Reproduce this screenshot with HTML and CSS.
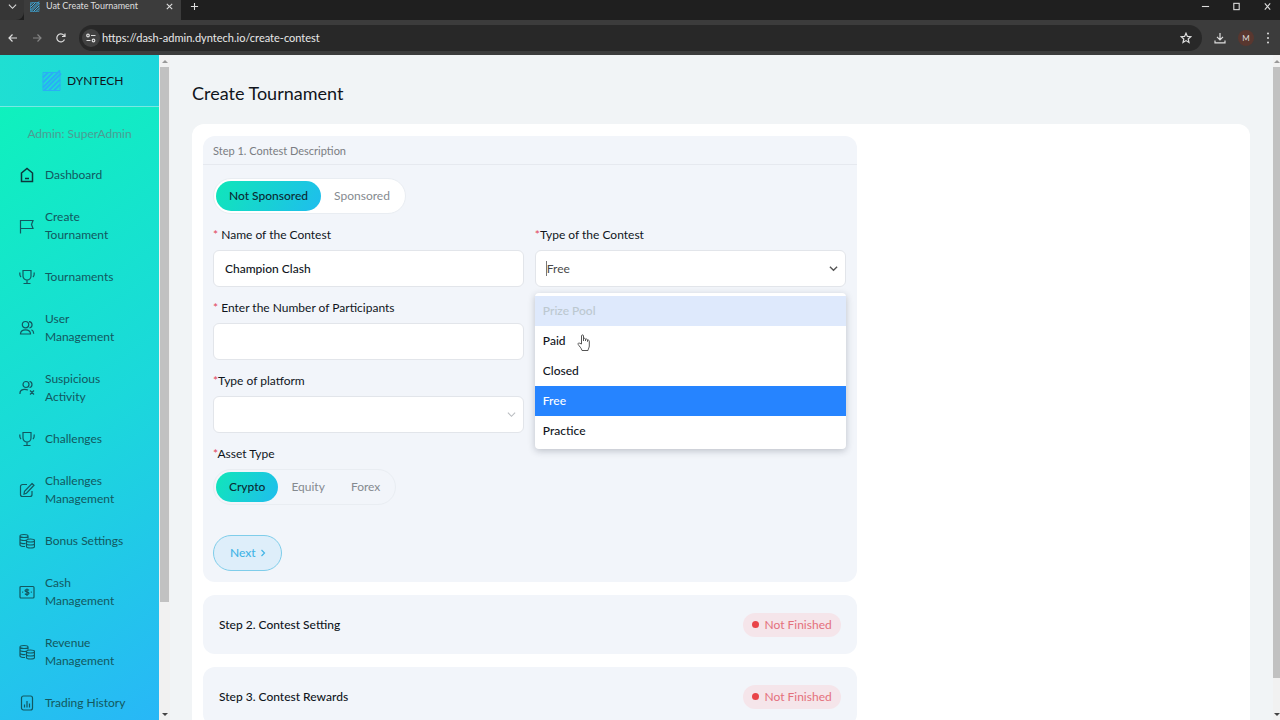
FILE: index.html
```html
<!DOCTYPE html>
<html lang="en">
<head>
<meta charset="utf-8">
<title>Uat Create Tournament</title>
<link rel="stylesheet" href="styles.css">
</head>
<body>
<svg class="defs" aria-hidden="true">
  <defs>
    <symbol id="logo" viewBox="0 0 20 22"><path fill="none" stroke="currentColor" stroke-width="2" d="M1 8 6 3M1 13 11 3M1 18 18 1M2 21 19 4M7 21 18 10M12 21 18 15"/><path fill="none" stroke="currentColor" stroke-width="1" d="M1 3h17v18H1z"/></symbol>
    <symbol id="cup" viewBox="0 0 16 16"><path d="M4 1.500h8v5.500a4 4 0 0 1-8 0zM8 11v3.500M4.500 14.500h7M1 3.500c-.5 2 0 3.500 1 4.500M15 3.500c.5 2 0 3.500-1 4.500"/></symbol>
    <symbol id="coins" viewBox="0 0 16 16"><path d="M1 3c0-2 8-2 8 0s-8 2-8 0v9c0 1.200 2.500 1.600 5 1.500M9 3v2.500M1 6c0 1.500 4 1.800 6 1.200M1 9c0 1.400 3 1.700 5.500 1.500M7.500 7.500c0-2 8-2 8 0s-8 2-8 0v6c0 2 8 2 8 0v-6M7.500 10.500c0 2 8 2 8 0"/></symbol>
    <symbol id="down" viewBox="0 0 10 10"><path d="m1 3 4 4 4-4"/></symbol>
  </defs>
</svg>

<header class="browser">
  <div class="tabstrip">
    <button class="tab-search" aria-label="Search tabs"><svg class="ico ico-xs"><use href="#down"/></svg></button>
    <div class="tab">
      <svg class="favicon"><use href="#logo"/></svg>
      <span class="tab-title">Uat Create Tournament</span>
      <button class="bare" aria-label="Close tab"><svg class="ico ico-xs" viewBox="0 0 10 10"><path d="m2 2 6 6M8 2 2 8"/></svg></button>
    </div>
    <button class="bare new-tab" aria-label="New tab"><svg class="ico ico-xs" viewBox="0 0 10 10"><path d="M5 1v8M1 5h8"/></svg></button>
    <div class="window-buttons">
      <button class="bare" aria-label="Minimize"><svg class="ico ico-xs" viewBox="0 0 10 10"><path d="M1 5h8"/></svg></button>
      <button class="bare" aria-label="Maximize"><svg class="ico ico-xs" viewBox="0 0 10 10"><rect x="2" y="1.500" width="6" height="7"/></svg></button>
      <button class="bare" aria-label="Close"><svg class="ico ico-xs" viewBox="0 0 10 10"><path d="m2 1.500 6 7M8 1.500l-6 7"/></svg></button>
    </div>
  </div>
  <div class="toolbar">
    <div class="history">
      <button class="bare" aria-label="Back"><svg class="ico ico-sm" viewBox="0 0 12 12"><path d="M10 6H2M5.500 2.500 2 6l3.500 3.500"/></svg></button>
      <button class="bare dim" aria-label="Forward"><svg class="ico ico-sm" viewBox="0 0 12 12"><path d="M2 6h8M6.500 2.500 10 6 6.500 9.500"/></svg></button>
      <button class="bare" aria-label="Reload"><svg class="ico ico-sm" viewBox="0 0 12 12"><path d="M9.500 7.500a4 4 0 1 1-.7-4.300L10 4.500M10 1.500v3H7"/></svg></button>
    </div>
    <div class="omnibox">
      <button class="site-info" aria-label="Site information"><svg class="ico ico-sm" viewBox="0 0 12 12"><circle cx="3" cy="3.500" r="1.300"/><path d="M6 3.500h4.500M1.500 8.500h4"/><circle cx="8.500" cy="8.500" r="1.300"/></svg></button>
      <input class="url" aria-label="Address" value="https://dash-admin.dyntech.io/create-contest">
      <button class="bare" aria-label="Bookmark"><svg class="ico ico-sm" viewBox="0 0 12 12"><path d="m6 1.200 1.400 3.200 3.500.3-2.700 2.300.8 3.500-3-1.900-3 1.900.8-3.500L1.100 4.700l3.500-.3z"/></svg></button>
    </div>
    <button class="bare" aria-label="Downloads"><svg class="ico ico-sm" viewBox="0 0 12 12"><path d="M6 1v6.500M3 4.800l3 3 3-3M1 8.500v2.300h10V8.500"/></svg></button>
    <button class="avatar" aria-label="Profile">M</button>
    <button class="bare" aria-label="Menu"><svg class="kebab" viewBox="0 0 4 12"><circle cx="2" cy="1.500" r="1"/><circle cx="2" cy="6" r="1"/><circle cx="2" cy="10.500" r="1"/></svg></button>
  </div>
</header>

<div class="app">
  <aside class="sidebar">
    <div class="brand"><svg class="brand-logo"><use href="#logo"/></svg><span>DYNTECH</span></div>
    <nav class="menu">
      <p class="who">Admin: SuperAdmin</p>
      <a href="#"><svg class="ico" viewBox="0 0 16 16"><path stroke-width="1.500" d="M2.500 6 8 1.500 13.500 6v8.500h-11zM6 11.500h4"/></svg><span>Dashboard</span></a>
      <a href="#"><svg class="ico" viewBox="0 0 16 16"><path d="M1.500 15.500V2.500H14L12.500 6.500l1.500 4H1.500"/></svg><span>Create Tournament</span></a>
      <a href="#"><svg class="ico"><use href="#cup"/></svg><span>Tournaments</span></a>
      <a href="#"><svg class="ico" viewBox="0 0 16 16"><circle cx="6.500" cy="4.700" r="3.200"/><path d="M1.500 14c0-5.500 10-5.500 10 0zM10 1.600c4 .3 4 5.700.5 6.300M12.500 9.700c1.500.7 2.200 2 2.200 4.100"/></svg><span>User Management</span></a>
      <a href="#"><svg class="ico" viewBox="0 0 16 16"><circle cx="7" cy="4.500" r="3"/><path d="M1 14v-1c0-4 5-4 8-3M10.500 1.500c3.300.3 3.300 5.500 0 6M11 10.500l4 4M15 10.500l-4 4"/></svg><span>Suspicious Activity</span></a>
      <a href="#"><svg class="ico"><use href="#cup"/></svg><span>Challenges</span></a>
      <a href="#"><svg class="ico" viewBox="0 0 16 16"><path d="M8 2.500H3.500a2 2 0 0 0-2 2v8a2 2 0 0 0 2 2H11a2 2 0 0 0 2-2V9M13 1.500l2 1.700-7.500 8L5 12l.5-2.700z"/></svg><span>Challenges Management</span></a>
      <a href="#"><svg class="ico"><use href="#coins"/></svg><span>Bonus Settings</span></a>
      <a href="#"><svg class="ico" viewBox="0 0 16 16"><rect x="1" y="2.500" width="14" height="11.500" rx="1"/><path d="M10 6.300c-.7-1-4-1-4 .4 0 1.600 4 .8 4 2.600 0 1.500-3.300 1.500-4 .3M8 4.500v7.500M3.200 8.200h1M11.800 8.200h1"/></svg><span>Cash Management</span></a>
      <a href="#"><svg class="ico"><use href="#coins"/></svg><span>Revenue Management</span></a>
      <a href="#"><svg class="ico" viewBox="0 0 16 16"><rect x="2.500" y="1" width="11" height="14" rx="2"/><path d="M5.500 12.500V9.500M8 12.500V6M10.500 12.500v-4"/></svg><span>Trading History</span></a>
    </nav>
  </aside>
  <div class="scroll side-scroll" aria-hidden="true"><i class="arrow up"></i><i class="thumb"></i><i class="rest"></i><i class="arrow down"></i></div>

  <main class="page">
    <h1>Create Tournament</h1>
    <div class="card">
      <form class="steps">
        <section class="step">
          <h2 class="step-head">Step 1. Contest Description</h2>
          <div class="step-body">
            <div class="toggle solid" role="radiogroup" aria-label="Sponsorship">
              <input type="radio" name="sponsor" id="sp-no" checked><label for="sp-no">Not Sponsored</label>
              <input type="radio" name="sponsor" id="sp-yes"><label for="sp-yes">Sponsored</label>
            </div>
            <div class="fields">
              <div class="field">
                <label for="name"><b>*</b> Name of the Contest</label>
                <input class="control" id="name" type="text" value="Champion Clash">
              </div>
              <div class="field">
                <label for="type"><b>*</b>Type of the Contest</label>
                <div class="select-wrap">
                  <select class="control chosen" id="type"><option>Free</option><option>Paid</option><option>Closed</option><option>Practice</option></select>
                  <i class="caret"></i>
                  <svg class="ico chevron dark"><use href="#down"/></svg>
                  <ul class="options" role="listbox" aria-label="Type of the Contest">
                    <li class="disabled" role="option" aria-disabled="true">Prize Pool</li>
                    <li role="option">Paid</li>
                    <li role="option">Closed</li>
                    <li class="selected" role="option" aria-selected="true">Free</li>
                    <li role="option">Practice</li>
                  </ul>
                  <svg class="pointer" viewBox="0 0 14 18" aria-hidden="true"><path d="M4.500 10V2c0-1.500 2-1.500 2 0v5-2c0-1 2-1 2 .3V7 5.700c0-1 2-1 2 .3v1.500-.7c0-1 1.800-1 1.800.4V12c0 1.500-1 2.500-1.300 4.500H5C4.500 14 2 12 1.200 10.500c-.6-1.300.7-2 1.600-1.200z"/></svg>
                </div>
              </div>
              <div class="field">
                <label for="count"><b>*</b> Enter the Number of Participants</label>
                <input class="control" id="count" type="text">
              </div>
              <div class="field platform">
                <label for="platform"><b>*</b>Type of platform</label>
                <div class="select-wrap">
                  <select class="control" id="platform"><option></option></select>
                  <svg class="ico chevron"><use href="#down"/></svg>
                </div>
              </div>
            </div>
            <div class="field">
              <span class="label" id="asset"><b>*</b>Asset Type</span>
              <div class="toggle" role="radiogroup" aria-labelledby="asset">
                <input type="radio" name="asset" id="as-c" checked><label for="as-c">Crypto</label>
                <input type="radio" name="asset" id="as-e"><label for="as-e">Equity</label>
                <input type="radio" name="asset" id="as-f"><label for="as-f">Forex</label>
              </div>
            </div>
            <button type="button" class="next">Next <svg class="ico" viewBox="0 0 6 10"><path d="m1.500 2 3 3-3 3"/></svg></button>
          </div>
        </section>
        <section class="step closed"><h2>Step 2. Contest Setting</h2><span class="badge">Not Finished</span></section>
        <section class="step closed"><h2>Step 3. Contest Rewards</h2><span class="badge">Not Finished</span></section>
      </form>
    </div>
  </main>
  <div class="scroll page-scroll" aria-hidden="true"><i class="arrow up"></i><i class="thumb"></i><i class="rest"></i><i class="arrow down"></i></div>
</div>
</body>
</html>
```

FILE: styles.css
```css
* { box-sizing: border-box; }
body {
  margin: 0;
  height: 100vh;
  display: flex;
  flex-direction: column;
  overflow: hidden;
  font: 12px/18px Lato, "Liberation Sans", sans-serif;
  color: #10151c;
}
button, input, select { font: inherit; color: inherit; }
button { cursor: pointer; }
h1, h2, p, ul { margin: 0; padding: 0; font-weight: 400; }
.defs { position: absolute; width: 0; height: 0; }
.ico {
  width: 16px;
  height: 16px;
  flex: none;
  fill: none;
  stroke: currentColor;
  stroke-width: 1.2;
}
.ico-sm { width: 12px; height: 12px; }
.ico-xs { width: 9px; height: 9px; }
.bare { display: flex; padding: 0; border: 0; background: none; }

/* Browser frame */
.browser { flex: none; background: #3c3c3c; color: #dedede; }
.tabstrip { display: flex; height: 20px; background: #1f1f1f; padding-bottom: 8px; align-items: center; }
.tab-search {
  display: flex;
  width: 24px;
  height: 20px;
  align-items: center;
  justify-content: center;
  margin-bottom: -8px;
  padding: 0 0 8px;
  border: 0;
  border-radius: 0 0 8px 0;
  background: #363636;
}
.tab {
  display: flex;
  align-items: center;
  gap: 6px;
  width: 157px;
  height: 20px;
  margin-bottom: -8px;
  padding: 0 7px 8px 6px;
  background: #3c3c3c;
}
.favicon { width: 10px; height: 11px; color: #3fb4ea; }
.tab-title { flex: 1; font: 9px/12px Lato, sans-serif; white-space: nowrap; }
.new-tab { margin-left: 9px; }
.window-buttons { display: flex; gap: 22px; margin-left: auto; padding-right: 8px; }
.toolbar { display: flex; align-items: center; gap: 12px; height: 35px; padding: 0 10px 0 7px; }
.history { display: flex; gap: 12px; }
.dim { color: #858585; }
.omnibox {
  flex: 1;
  display: flex;
  align-items: center;
  height: 26px;
  padding: 0 10px 0 3px;
  border-radius: 13px;
  background: #282828;
}
.site-info {
  display: flex;
  align-items: center;
  justify-content: center;
  width: 18px;
  height: 18px;
  padding: 0;
  border: 0;
  border-radius: 50%;
  background: #414141;
}
.url {
  flex: 1;
  min-width: 0;
  margin-left: 2px;
  padding: 0;
  border: 0;
  outline: 0;
  background: none;
  font: 11px/18px Lato, sans-serif;
  color: #e8e8e8;
}
.avatar {
  width: 16px;
  height: 16px;
  padding: 0;
  border: 0;
  border-radius: 50%;
  background: #59372f;
  font-size: 8px;
  line-height: 16px;
}
.kebab { width: 4px; height: 12px; fill: currentColor; }

/* Page frame */
.app { flex: 1; display: flex; min-height: 0; background: #f1f4f6; }
.sidebar { flex: none; width: 159px; display: flex; flex-direction: column; }
.brand {
  flex: none;
  display: flex;
  align-items: center;
  gap: 5px;
  height: 52px;
  padding-left: 42px;
  border-bottom: 1px solid #77e9e3;
  background: linear-gradient(100deg, #1fdfd2, #1dd6dc);
}
.brand-logo { width: 20px; height: 23px; color: #2aaef5; }
.menu {
  flex: 1;
  min-height: 0;
  overflow: hidden;
  padding-top: 18px;
  background: linear-gradient(145deg, #0ff1bd, #1bd8db 52%, #28b7f7);
}
.who { margin-bottom: 11px; text-align: center; color: #4b9c93; }
.menu a {
  display: flex;
  align-items: center;
  gap: 10px;
  padding: 12px 0 12px 19px;
  color: #125860;
  text-decoration: none;
}
.menu a span { width: min-content; min-width: 85px; }
.menu a:first-of-type .ico { color: #0c363c; }

.scroll { flex: none; display: flex; flex-direction: column; background: #f1f1f1; }
.side-scroll { width: 11px; padding: 0 1px; }
.page-scroll { width: 7px; }
.thumb { background: #c1c1c1; }
.side-scroll .thumb { flex: 534; }
.side-scroll .rest { flex: 106; }
.page-scroll .thumb { flex: 610; }
.page-scroll .rest { flex: 30; }
.arrow { height: 12px; display: flex; align-items: center; justify-content: center; }
.arrow::before { content: ""; border: 3px solid transparent; }
.up::before { border-top: 0; border-bottom-color: #999; }
.down::before { border-bottom: 0; border-top-color: #444; }

.page { flex: 1; min-width: 0; overflow: hidden; padding: 25px 23px 0 22px; }
h1 { font-size: 18px; line-height: 26px; }
.card { margin-top: 18px; padding: 12px 11px; min-height: 100%; border-radius: 12px; background: #fff; }
.steps { width: 63.1%; display: flex; flex-direction: column; gap: 13px; }
.step { border-radius: 12px; background: #f2f5fa; }
.step-head {
  padding: 6px 10px 4px;
  border-bottom: 1px solid #e6e9ef;
  font-size: 11px;
  color: #7a7d82;
}
.step-body { padding: 13px 11px 11px 10px; }
.closed { display: flex; align-items: center; justify-content: space-between; min-height: 59px; padding: 0 16px; }
.closed h2 { font-size: 12px; font-weight: 500; }
.badge {
  display: flex;
  align-items: center;
  gap: 5px;
  padding: 3px 9px;
  border-radius: 12px;
  background: #f5e5ea;
  color: #e4707c;
}
.badge::before { content: ""; width: 7px; height: 7px; border-radius: 50%; background: #e94448; }

/* Form */
.toggle {
  display: flex;
  width: fit-content;
  padding: 2px;
  border: 1px solid #e9edf2;
  border-radius: 18px;
}
.toggle.solid { background: #fff; }
.toggle input { position: absolute; opacity: 0; }
.toggle label { padding: 6px 13px; border-radius: 15px; color: #858a90; }
.toggle input:checked + label {
  background: linear-gradient(120deg, #10e6b9, #1fbdee);
  color: #0a2b33;
  font-weight: 500;
}
.fields { display: grid; grid-template-columns: 1fr 1fr; gap: 12px 11px; margin: 12px 0; }
.platform { grid-column: 1; }
.field > label, .label { display: block; margin-bottom: 6px; white-space: pre; }
.field b { font-weight: 400; color: #e2455a; }
.control {
  display: block;
  width: 100%;
  height: 37px;
  padding: 0 11px;
  border: 1px solid #e2e5ea;
  border-radius: 6px;
  outline: 0;
  background: #fff;
  appearance: none;
}
input.control { font-weight: 500; }
.chosen { color: #4a4a4a; }
.select-wrap { position: relative; }
.caret { position: absolute; left: 11px; top: 11px; width: 1px; height: 15px; background: #777; }
.chevron { position: absolute; right: 8px; top: 14px; width: 9px; height: 9px; color: #b9bcc0; }
.chevron.dark { color: #555; stroke-width: 1.500; }
.options {
  position: absolute;
  z-index: 2;
  top: 43px;
  left: 0;
  right: 0;
  padding: 3px 0;
  list-style: none;
  border-radius: 4px;
  background: #fff;
  box-shadow: 0 2px 7px rgba(30, 40, 60, .25);
}
.options li { padding: 6px 8px; font-weight: 500; }
.options .disabled { background: #dee9fc; color: #bcc8d0; }
.options .selected { background: #2684ff; color: #fff; }
.pointer {
  position: absolute;
  z-index: 3;
  left: 42px;
  top: 84px;
  width: 14px;
  height: 18px;
  fill: #fff;
  stroke: #555;
}
.next {
  display: flex;
  align-items: center;
  gap: 4px;
  height: 36px;
  margin-top: 30px;
  padding: 0 15px 0 16px;
  border: 1px solid #7fcdea;
  border-radius: 18px;
  background: #deeefa;
  color: #42b4e6;
  font-weight: 500;
}
.next .ico { width: 6px; height: 10px; }
```
